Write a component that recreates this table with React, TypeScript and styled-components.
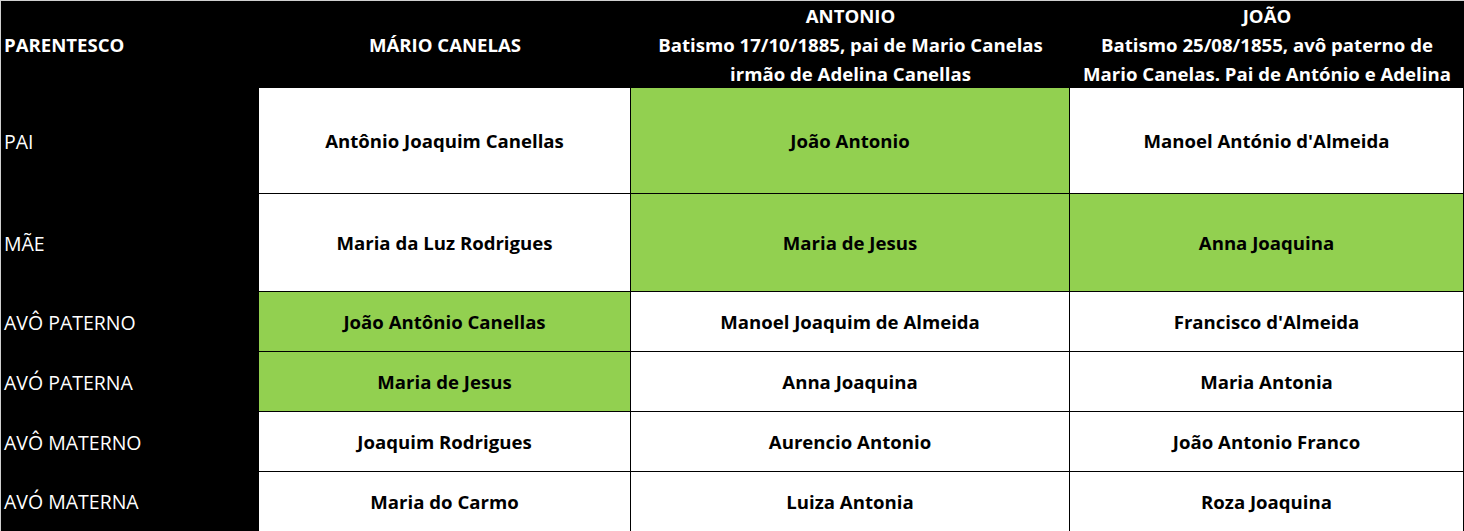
import styled, { createGlobalStyle } from "styled-components"

const GlobalStyle = createGlobalStyle`
    html, body {
        margin: 0;
        padding: 0;
        background: #ffffff;
    }
    body {
        font-family: "Open Sans", "Noto Sans", sans-serif;
    }
`

type Row = {
    label: string
    height: number
    cells: { name: string; green?: boolean }[]
}

const rows: Row[] = [
    {
        label: "PAI",
        height: 106,
        cells: [
            { name: "Antônio Joaquim Canellas" },
            { name: "João Antonio", green: true },
            { name: "Manoel António d'Almeida" },
        ],
    },
    {
        label: "MÃE",
        height: 98,
        cells: [
            { name: "Maria da Luz Rodrigues" },
            { name: "Maria de Jesus", green: true },
            { name: "Anna Joaquina", green: true },
        ],
    },
    {
        label: "AVÔ PATERNO",
        height: 60,
        cells: [
            { name: "João Antônio Canellas", green: true },
            { name: "Manoel Joaquim de Almeida" },
            { name: "Francisco d'Almeida" },
        ],
    },
    {
        label: "AVÓ PATERNA",
        height: 60,
        cells: [
            { name: "Maria de Jesus", green: true },
            { name: "Anna Joaquina" },
            { name: "Maria Antonia" },
        ],
    },
    {
        label: "AVÔ MATERNO",
        height: 60,
        cells: [
            { name: "Joaquim Rodrigues" },
            { name: "Aurencio Antonio" },
            { name: "João Antonio Franco" },
        ],
    },
    {
        label: "AVÓ MATERNA",
        height: 59,
        cells: [
            { name: "Maria do Carmo" },
            { name: "Luiza Antonia" },
            { name: "Roza Joaquina" },
        ],
    },
]

export default function App() {
    return (
        <>
            <GlobalStyle />
            <Sheet $rows={rows.map((r) => r.height)}>
                <HeaderCell $align="left">PARENTESCO</HeaderCell>
                <HeaderCell $align="center">MÁRIO CANELAS</HeaderCell>
                <HeaderCell $align="center">
                    ANTONIO
                    <br />
                    Batismo 17/10/1885, pai de Mario Canelas
                    <br />
                    irmão de Adelina Canellas
                </HeaderCell>
                <HeaderCell $align="center">
                    JOÃO
                    <br />
                    Batismo 25/08/1855, avô paterno de
                    <br />
                    Mario Canelas. Pai de António e Adelina
                </HeaderCell>
                {rows.map((row, i) => (
                    <RowGroup key={row.label}>
                        <LabelCell>{row.label}</LabelCell>
                        {row.cells.map((cell) => (
                            <NameCell
                                key={cell.name}
                                $green={cell.green}
                                $last={i === rows.length - 1}
                            >
                                {cell.name}
                            </NameCell>
                        ))}
                    </RowGroup>
                ))}
            </Sheet>
        </>
    )
}

const Sheet = styled.div<{ $rows: number[] }>`
    width: 1464px;
    height: 531px;
    box-sizing: border-box;
    border-top: 1px solid #d0d0d0;
    border-left: 1px solid #d0d0d0;
    display: grid;
    grid-template-columns: 258px 372px 439px 394px;
    grid-template-rows: 87px ${(p) => p.$rows.map((h) => `${h}px`).join(" ")};
    background: #000;
    font-size: 18.6px;
`

const RowGroup = styled.div`
    display: contents;
`

const HeaderCell = styled.div<{ $align: "left" | "center" }>`
    background: #000;
    color: #fff;
    font-weight: 700;
    line-height: 29px;
    display: flex;
    flex-direction: column;
    justify-content: center;
    align-items: ${(p) => (p.$align === "left" ? "flex-start" : "center")};
    text-align: ${(p) => p.$align};
    padding-left: ${(p) => (p.$align === "left" ? "3px" : "0")};
    white-space: nowrap;
`

const LabelCell = styled.div`
    background: #000;
    color: #fff;
    font-weight: 400;
    font-size: 19.5px;
    display: flex;
    align-items: center;
    padding-left: 3px;
`

const NameCell = styled.div<{ $green?: boolean; $last?: boolean }>`
    box-sizing: border-box;
    background: ${(p) => (p.$green ? "#92d050" : "#fff")};
    color: #000;
    font-weight: 700;
    display: flex;
    align-items: center;
    justify-content: center;
    border-right: 1px solid #000;
    border-bottom: ${(p) => (p.$last ? "none" : "1px solid #000")};
    white-space: nowrap;
`
